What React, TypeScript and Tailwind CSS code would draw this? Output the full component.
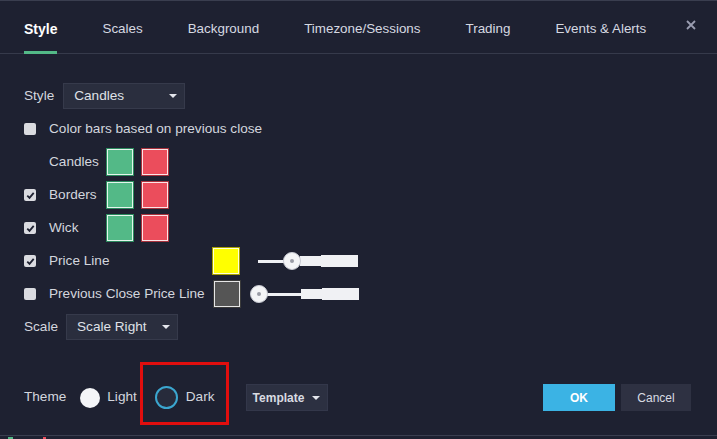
import React from 'react'

const tabs = ['Style', 'Scales', 'Background', 'Timezone/Sessions', 'Trading', 'Events & Alerts']

function Checkbox({ checked }: { checked?: boolean }) {
  return (
    <span className="w-3 h-3 rounded-[2px] bg-[#dadbe0] flex items-center justify-center shrink-0">
      {checked && (
        <svg width="9" height="9" viewBox="0 0 9 9">
          <path d="M1.3 4.6 L3.5 6.8 L7.7 1.8" stroke="#1e2131" strokeWidth="1.8" fill="none" />
        </svg>
      )}
    </span>
  )
}

function Swatch({ color, ring }: { color: string; ring: string }) {
  return (
    <span
      className={`w-[26px] h-[26px] border border-white/85 outline outline-1 ${ring} ${color} shrink-0`}
    />
  )
}

function Caret() {
  return (
    <svg width="8" height="4" viewBox="0 0 8 4" className="shrink-0">
      <path d="M0 0 L8 0 L4 4 Z" fill="#e4e6ec" />
    </svg>
  )
}

function Slider({ pos }: { pos: number }) {
  return (
    <div className="relative w-[100px] h-[20px] flex items-center">
      <div className="flex items-center w-full">
        <div className="h-[3px] bg-[#f0f1f4] w-[42px]" />
        <div className="h-[10px] bg-[#f0f1f4] w-[21px]" />
        <div className="h-[12px] bg-[#f0f1f4] flex-1" />
      </div>
      <div
        className="absolute top-[1px] w-[18px] h-[18px] rounded-full bg-[#f4f5f7] border border-[#c8cad2] flex items-center justify-center"
        style={{ left: pos - 9 }}
      >
        <span className="w-[4px] h-[4px] rounded-full bg-[#9a9ca6]" />
      </div>
    </div>
  )
}

export default function App() {
  return (
    <main
      className="w-[717px] h-[439px] bg-[#1e2131] text-[#d3d6de] text-[13.6px] border-t border-[#3a3e4f] flex flex-col overflow-hidden"
      style={{ fontFamily: '"Liberation Sans", Arial, sans-serif' }}
    >
      {/* tabs */}
      <div className="h-[53px] border-b border-[#363a4b] flex items-center px-6 relative shrink-0">
        <div className="flex gap-[45px] h-full">
          {tabs.map((t, i) => (
            <div key={t} className="relative h-full flex items-center pt-[4px]">
              <span className={i === 0 ? 'font-bold text-white text-[14px]' : 'text-[#d6d9e1] text-[13.4px]'}>{t}</span>
              {i === 0 && <span className="absolute left-0 right-0 -bottom-[1px] h-[3px] bg-[#53b987]" />}
            </div>
          ))}
        </div>
        <svg width="10" height="10" viewBox="0 0 10 10" className="absolute left-[686px] top-[19px]">
          <path d="M1 1 L9 9 M9 1 L1 9" stroke="#9a9db0" strokeWidth="1.8" />
        </svg>
      </div>

      {/* content */}
      <div className="flex flex-col gap-[7px] pl-6 pt-[29px]">
        <div className="h-[26px] flex items-center gap-[9px]">
          <span>Style</span>
          <div className="w-[122px] h-[26px] bg-[#2a2e3e] border border-[#363a4b] flex items-center justify-between pl-[10px] pr-[7px]">
            <span className="text-[#dfe1e7]">Candles</span>
            <Caret />
          </div>
        </div>

        <div className="h-[26px] flex items-center gap-[13px]">
          <Checkbox />
          <span>Color bars based on previous close</span>
        </div>

        <div className="h-[26px] flex items-center pl-[25px]">
          <span className="w-[58px]">Candles</span>
          <div className="flex gap-[9px]">
            <Swatch color="bg-[#53b987]" ring="outline-[#2b8a5e]" />
            <Swatch color="bg-[#eb4d5c]" ring="outline-[#a8323d]" />
          </div>
        </div>

        <div className="h-[26px] flex items-center">
          <Checkbox checked />
          <span className="w-[58px] ml-[13px]">Borders</span>
          <div className="flex gap-[9px]">
            <Swatch color="bg-[#53b987]" ring="outline-[#2b8a5e]" />
            <Swatch color="bg-[#eb4d5c]" ring="outline-[#a8323d]" />
          </div>
        </div>

        <div className="h-[26px] flex items-center">
          <Checkbox checked />
          <span className="w-[58px] ml-[13px]">Wick</span>
          <div className="flex gap-[9px]">
            <Swatch color="bg-[#53b987]" ring="outline-[#2b8a5e]" />
            <Swatch color="bg-[#eb4d5c]" ring="outline-[#a8323d]" />
          </div>
        </div>

        <div className="h-[26px] flex items-center">
          <Checkbox checked />
          <span className="w-[164px] ml-[13px]">Price Line</span>
          <Swatch color="bg-[#ffff00]" ring="outline-[#a8a000]" />
          <div className="ml-[19px]">
            <Slider pos={34} />
          </div>
        </div>

        <div className="h-[26px] flex items-center">
          <Checkbox />
          <span className="w-[165px] ml-[13px] whitespace-nowrap">Previous Close Price Line</span>
          <Swatch color="bg-[#555555]" ring="outline-[#3a3a3a]" />
          <div className="ml-[19px]">
            <Slider pos={0} />
          </div>
        </div>

        <div className="h-[26px] flex items-center gap-[8px]">
          <span>Scale</span>
          <div className="w-[112px] h-[26px] bg-[#2a2e3e] border border-[#363a4b] flex items-center justify-between pl-[10px] pr-[7px]">
            <span className="text-[#dfe1e7]">Scale Right</span>
            <Caret />
          </div>
        </div>
      </div>

      {/* footer */}
      <div className="mt-[44px] h-[27px] pl-6 pr-[26px] flex items-center">
        <span>Theme</span>
        <span className="ml-[14px] w-[20px] h-[20px] rounded-full bg-[#f4f5f8]" />
        <span className="ml-[7px]">Light</span>
        <div className="relative ml-[18px] flex items-center">
          <span className="w-[23px] h-[23px] rounded-full border-2 border-[#3ba6cf] bg-[#272b3b]" />
          <span className="ml-[8px]">Dark</span>
          {/* highlight annotation */}
          <span className="absolute -left-[15px] top-[-24px] w-[89px] h-[63px] border-[3px] border-[#e10e0e]" />
        </div>
        <div className="ml-[31px] w-[82px] h-[27px] bg-[#2c3041] border border-[#33374a] flex items-center justify-center gap-[8px] text-[12px] font-bold text-[#d9dbe2]">
          <span>Template</span>
          <Caret />
        </div>
        <div className="ml-auto flex gap-[6px]">
          <div className="w-[72px] h-[27px] bg-[#3bb3e4] flex items-center justify-center text-[12px] font-bold text-white">
            OK
          </div>
          <div className="w-[70px] h-[27px] bg-[#2e3142] flex items-center justify-center text-[12px] text-[#d9dbe2]">
            Cancel
          </div>
        </div>
      </div>

      <div className="mt-[24px] border-t border-[#3a3e4f] h-[3px] flex gap-[30px] pl-[8px]">
        <span className="w-[5px] h-[2px] mt-[1px] bg-[#53b987]" />
        <span className="w-[3px] h-[2px] mt-[1px] bg-[#eb4d5c]" />
      </div>
    </main>
  )
}
